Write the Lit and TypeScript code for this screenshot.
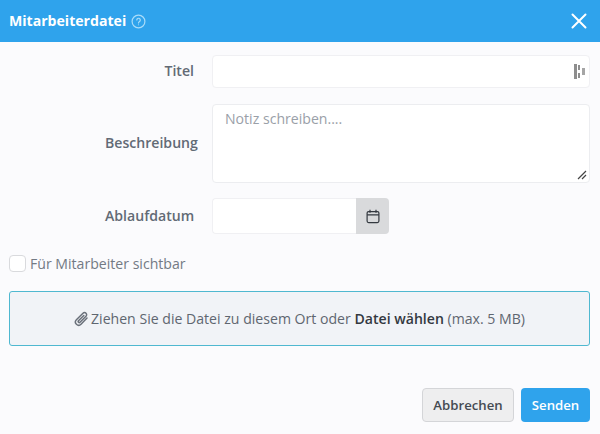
import { LitElement, html, css } from "lit";
import { customElement } from "lit/decorators.js";

@customElement("app-root")
export class AppRoot extends LitElement {
  static styles = css`
    :host {
      display: block;
      width: 600px;
      height: 434px;
      overflow: hidden;
      background: #fbfbfd;
      font-family: "Open Sans", "Noto Sans", sans-serif;
      font-size: 14.1px;
      color: #6c757d;
    }
    .header {
      height: 42px;
      background: #2fa3ec;
      display: flex;
      align-items: center;
      padding: 0 13px 0 9px;
      color: #fff;
    }
    .title {
      font-size: 14.1px;
      font-weight: 700;
      line-height: 42px;
    }
    .help {
      margin-left: 5px;
      display: block;
    }
    .close {
      margin-left: auto;
      display: block;
    }
    .form {
      display: flex;
      flex-direction: column;
      padding: 13px 10px 0 9px;
    }
    .row {
      display: grid;
      grid-template-columns: 203px 1fr;
    }
    .row label {
      font-weight: 600;
      color: #626a75;
      text-align: right;
    }
    .row .l2 {
      text-align: left;
      padding-left: 96px;
    }
    .r1 label { line-height: 31px; padding-right: 18px; }
    .r2 { margin-top: 16px; }
    .r2 label { line-height: 22px; padding-top: 28px; }
    .r3 { margin-top: 15px; }
    .r3 label { line-height: 36px; }
    .input {
      height: 33px;
      box-sizing: border-box;
      background: #fff;
      border: 1px solid #f0f0f3;
      border-radius: 4px;
      display: flex;
      align-items: center;
      justify-content: flex-end;
      padding-right: 3px;
    }
    .area {
      height: 79px;
      box-sizing: border-box;
      background: #fff;
      border: 1px solid #ecedf0;
      border-radius: 4px;
      padding: 3px 12px;
      color: #9aa0a8;
      line-height: 22px;
      position: relative;
    }
    .grip {
      position: absolute;
      right: 1px;
      bottom: 1px;
      display: block;
    }
    .date {
      display: flex;
      width: 177px;
      height: 36px;
    }
    .date .field {
      flex: 1;
      background: #fff;
      border: 1px solid #f0f0f3;
      border-right: none;
      border-radius: 4px 0 0 4px;
    }
    .date .addon {
      width: 33px;
      background: #d9dadc;
      border-radius: 0 4px 4px 0;
      display: flex;
      align-items: center;
      justify-content: center;
    }
    .check {
      display: flex;
      align-items: center;
      margin-top: 17px;
      height: 24px;
      color: #737a84;
    }
    .box {
      width: 17px;
      height: 17px;
      box-sizing: border-box;
      background: #fff;
      border: 1px solid #d9dadd;
      border-radius: 4px;
      margin-right: 4px;
    }
    .drop {
      margin-top: 16px;
      height: 55px;
      box-sizing: border-box;
      border: 1px solid #4fb8d0;
      border-radius: 3px;
      background: #f1f3f7;
      display: flex;
      align-items: center;
      justify-content: center;
      color: #5f6670;
    }
    .drop svg { margin-right: 2px; display: block; }
    .drop b { font-weight: 600; color: #33383f; }
    .drop span { white-space: pre; }
    .footer {
      display: flex;
      justify-content: flex-end;
      gap: 7px;
      margin-top: 42px;
    }
    .btn {
      height: 34px;
      box-sizing: border-box;
      border-radius: 4px;
      font-weight: 600;
      font-size: 13.2px;
      display: flex;
      align-items: center;
      justify-content: center;
    }
    .cancel {
      width: 92px;
      background: #eeeeef;
      border: 1px solid #d4d5d8;
      color: #454a52;
    }
    .send {
      width: 69px;
      background: #2fa3ec;
      color: #fff;
    }
  `;

  render() {
    return html`
      <div class="header">
        <span class="title">Mitarbeiterdatei</span>
        <svg class="help" width="15" height="15" viewBox="0 0 15 15" fill="none" stroke="#a9dcf9" stroke-width="1.2">
          <circle cx="7.5" cy="7.5" r="6.4"></circle>
          <path d="M5.8 6a1.75 1.75 0 1 1 2.7 1.5c-.6.4-1 .7-1 1.4" stroke-linecap="round"></path>
          <circle cx="7.5" cy="10.8" r=".5" fill="#a9dcf9" stroke="none"></circle>
        </svg>
        <svg class="close" width="16" height="16" viewBox="0 0 16 16" stroke="#fff" stroke-width="2" stroke-linecap="round">
          <path d="M1.5 1.5 14.5 14.5M14.5 1.5 1.5 14.5"></path>
        </svg>
      </div>
      <div class="form">
        <div class="row r1">
          <label>Titel</label>
          <div class="input">
            <svg width="12" height="15" viewBox="0 0 12 15" fill="#8e8e8e">
              <rect x="0" y="0" width="3" height="15"></rect>
              <rect x="4" y="1" width="2" height="5"></rect>
              <rect x="4" y="9" width="2" height="5"></rect>
              <rect x="8" y="4" width="3" height="7" fill="#a5a5a5"></rect>
            </svg>
          </div>
        </div>
        <div class="row r2">
          <label class="l2">Beschreibung</label>
          <div class="area">
            Notiz schreiben....
            <svg class="grip" width="12" height="12" viewBox="0 0 12 12" stroke="#444" stroke-width="1.2">
              <path d="M2 10 10 2M6 10 10 6"></path>
            </svg>
          </div>
        </div>
        <div class="row r3">
          <label class="l2">Ablaufdatum</label>
          <div class="date">
            <div class="field"></div>
            <div class="addon">
              <svg width="14" height="15" viewBox="0 0 14 15" fill="none" stroke="#33383f" stroke-width="1.2">
                <rect x="1.1" y="2.6" width="11.8" height="11" rx="1.5"></rect>
                <path d="M1.1 5.8h11.8M4 .8v3M10 .8v3"></path>
              </svg>
            </div>
          </div>
        </div>
        <div class="check"><div class="box"></div>Für Mitarbeiter sichtbar</div>
        <div class="drop">
          <svg width="15" height="16" viewBox="0 0 15 16" fill="none" stroke="#6a707a" stroke-width="1.5" stroke-linecap="round">
            <path d="M13 7 7 13.2a3.2 3.2 0 0 1-4.6-4.5L9 2.2a2.1 2.1 0 0 1 3 3L6 11.2a1 1 0 0 1-1.5-1.4L9.8 4.5"></path>
          </svg>
          <span>Ziehen Sie die Datei zu diesem Ort oder <b>Datei wählen</b> (max. 5 MB)</span>
        </div>
        <div class="footer">
          <div class="btn cancel">Abbrechen</div>
          <div class="btn send">Senden</div>
        </div>
      </div>
    `;
  }
}
